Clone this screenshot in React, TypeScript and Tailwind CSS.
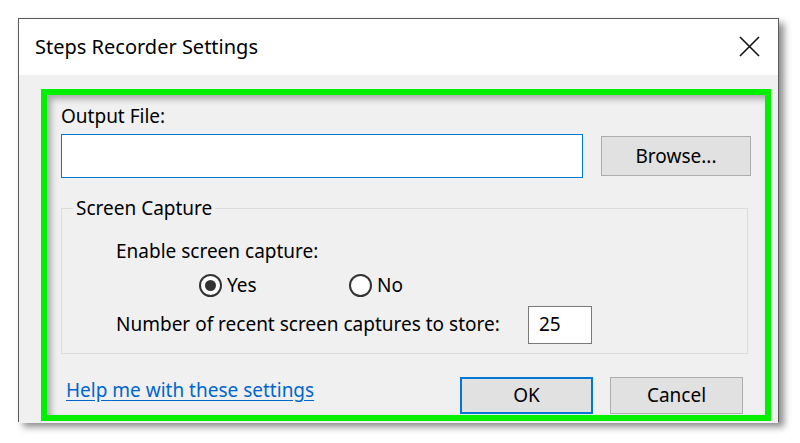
import React from "react";

function Radio({ checked }: { checked?: boolean }) {
  return (
    <span className="flex h-[23px] w-[23px] shrink-0 items-center justify-center rounded-full border-2 border-[#333333] bg-white">
      {checked && <span className="h-[11px] w-[11px] rounded-full bg-[#333333]" />}
    </span>
  );
}

export default function App() {
  return (
    <div
      className="h-[443px] w-[800px] overflow-hidden bg-white pl-[18px] pt-[18px] text-black"
      style={{ fontFamily: '"Noto Sans", "Open Sans", sans-serif' }}
    >
      <div className="flex h-[404px] w-[761px] flex-col border border-[#5a5a5a] shadow-[5px_5px_7px_rgba(0,0,0,0.45)]">
        {/* title bar */}
        <div className="flex h-[56px] shrink-0 items-center justify-between bg-white pl-[16px] pr-[18px]">
          <span className="text-[20px] leading-none">Steps Recorder Settings</span>
          <svg width="21" height="21" viewBox="0 0 21 21" className="mt-[-1px]">
            <path d="M1 1 L20 20 M20 1 L1 20" stroke="#111" strokeWidth="1.6" />
          </svg>
        </div>
        {/* body */}
        <div className="flex flex-1 flex-col bg-[#f0f0f0] pb-[2px] pl-[22px] pr-[7px] pt-[14px]">
          <div className="flex flex-1 flex-col border-[6px] border-[#00f000] shadow-[inset_4px_4px_6px_rgba(0,0,0,0.3)]">
            <div className="flex flex-1 flex-col pl-[14px] pr-[13px] pt-[9px] text-[19px]">
              <div className="leading-[24px]">Output File:</div>
              <div className="mt-[6px] flex items-center gap-[18px]">
                <div className="h-[44px] w-[522px] border border-[#0078d7] bg-white" />
                <button className="h-[40px] w-[150px] border border-[#adadad] bg-[#e1e1e1] text-[19px]">
                  Browse...
                </button>
              </div>
              <fieldset className="mt-[18px] h-[158px] w-[687px] border border-[#dcdcdc]">
                <legend className="ml-[11px] px-[3px] text-[19px] leading-[24px]">Screen Capture</legend>
                <div className="ml-[54px] mt-[19px] leading-[24px]">Enable screen capture:</div>
                <div className="ml-[137px] mt-[8px] flex items-center">
                  <label className="flex w-[150px] items-center gap-[5px]">
                    <Radio checked />
                    <span>Yes</span>
                  </label>
                  <label className="flex items-center gap-[5px]">
                    <Radio />
                    <span>No</span>
                  </label>
                </div>
                <div className="ml-[54px] mt-[6px] flex items-center">
                  <span className="w-[412px]">Number of recent screen captures to store:</span>
                  <div className="flex h-[38px] w-[64px] items-center border border-[#7a7a7a] bg-white pl-[10px]">25</div>
                </div>
              </fieldset>
              <div className="mt-[22px] flex items-center pr-[9px]">
                <a className="mb-[10px] ml-[5px] text-[#0066cc] underline underline-offset-[3px]">Help me with these settings</a>
                <button className="ml-auto h-[37px] w-[133px] border-2 border-[#0078d7] bg-[#e1e1e1] text-[19px]">
                  OK
                </button>
                <button className="ml-[17px] h-[37px] w-[133px] border border-[#adadad] bg-[#e1e1e1] text-[19px]">
                  Cancel
                </button>
              </div>
            </div>
          </div>
        </div>
      </div>
    </div>
  );
}
